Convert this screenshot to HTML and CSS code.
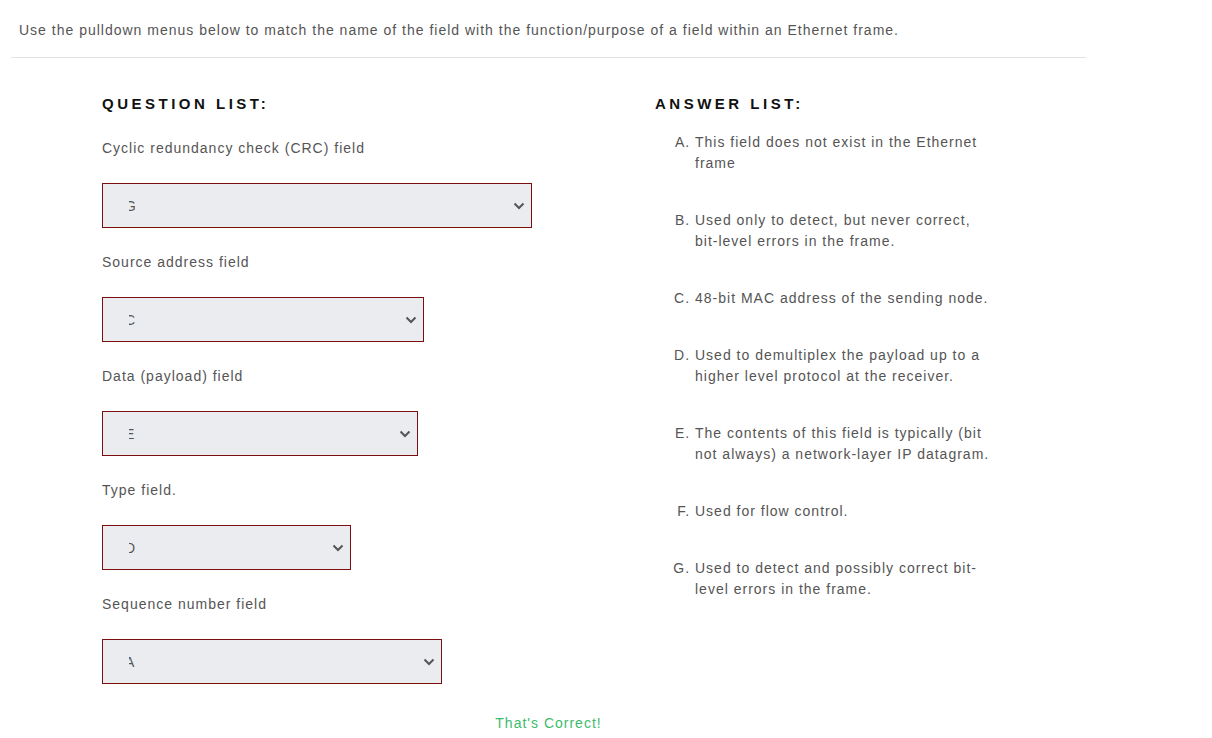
FILE: index.html
```html
<!DOCTYPE html>
<html>
<head>
<meta charset="utf-8">
<link rel="stylesheet" href="styles.css">
</head>
<body>
<div class="wrap">
  <p class="intro">Use the pulldown menus below to match the name of the field with the function/purpose of a field within an Ethernet frame.</p>
  <div class="cols">
    <div class="qcol">
      <h2 class="head">QUESTION LIST:</h2>
      <div class="q">
        <div class="qlabel">Cyclic redundancy check (CRC) field</div>
        <div class="sel" style="width:430px"><span class="val"><span>G</span></span><svg class="chev" viewBox="0 0 12 8" width="12" height="8"><path d="M1.5 1.5 L6 6 L10.5 1.5" fill="none" stroke="#555" stroke-width="2"/></svg></div>
      </div>
      <div class="q">
        <div class="qlabel">Source address field</div>
        <div class="sel" style="width:322px"><span class="val"><span>C</span></span><svg class="chev" viewBox="0 0 12 8" width="12" height="8"><path d="M1.5 1.5 L6 6 L10.5 1.5" fill="none" stroke="#555" stroke-width="2"/></svg></div>
      </div>
      <div class="q">
        <div class="qlabel">Data (payload) field</div>
        <div class="sel" style="width:316px"><span class="val"><span>E</span></span><svg class="chev" viewBox="0 0 12 8" width="12" height="8"><path d="M1.5 1.5 L6 6 L10.5 1.5" fill="none" stroke="#555" stroke-width="2"/></svg></div>
      </div>
      <div class="q">
        <div class="qlabel">Type field.</div>
        <div class="sel" style="width:249px"><span class="val"><span>D</span></span><svg class="chev" viewBox="0 0 12 8" width="12" height="8"><path d="M1.5 1.5 L6 6 L10.5 1.5" fill="none" stroke="#555" stroke-width="2"/></svg></div>
      </div>
      <div class="q">
        <div class="qlabel">Sequence number field</div>
        <div class="sel" style="width:340px"><span class="val"><span>A</span></span><svg class="chev" viewBox="0 0 12 8" width="12" height="8"><path d="M1.5 1.5 L6 6 L10.5 1.5" fill="none" stroke="#555" stroke-width="2"/></svg></div>
      </div>
    </div>
    <div class="acol">
      <h2 class="head">ANSWER LIST:</h2>
      <ol class="answers">
        <li>This field does not exist in the Ethernet frame</li>
        <li>Used only to detect, but never correct, bit-level errors in the frame.</li>
        <li>48-bit MAC address of the sending node.</li>
        <li>Used to demultiplex the payload up to a higher level protocol at the receiver.</li>
        <li>The contents of this field is typically (bit not always) a network-layer IP datagram.</li>
        <li>Used for flow control.</li>
        <li>Used to detect and possibly correct bit-level errors in the frame.</li>
      </ol>
    </div>
  </div>
  <p class="result">That's Correct!</p>
</div>
</body>
</html>
```

FILE: styles.css
```css
html, body {
  margin: 0;
  padding: 0;
  background: #fff;
}
body {
  font-family: "Liberation Sans", Arial, sans-serif;
  font-size: 14px;
  color: #555;
  letter-spacing: 1px;
}
.wrap {
  width: 1075px;
  margin-left: 11px;
}
.intro {
  margin: 0;
  padding: 21px 8px 18px 8px;
  line-height: 18px;
  border-bottom: 1px solid #e3e3e3;
}
.cols {
  display: flex;
  padding-top: 36px;
}
.qcol {
  width: 553px;
  padding-left: 91px;
  box-sizing: border-box;
}
.acol {
  padding-left: 91px;
}
.head {
  margin: 0;
  font-size: 15px;
  font-weight: bold;
  color: #111;
  letter-spacing: 3.5px;
  line-height: 20px;
}
.qcol .head {
  margin-bottom: 24px;
}
.qlabel {
  line-height: 20px;
  margin-bottom: 25px;
}
.q {
  margin-bottom: 24px;
}
.q:last-child {
  margin-bottom: 0;
}
.sel {
  height: 45px;
  box-sizing: border-box;
  border: 1px solid #7b0f0f;
  background: #ebecef;
  display: flex;
  align-items: center;
  justify-content: space-between;
  padding: 0 6px 0 26px;
}
.val {
  display: inline-block;
  width: 6px;
  overflow: hidden;
  color: #555;
  font-size: 14px;
  line-height: 16px;
}
.val span {
  display: inline-block;
  margin-left: -4px;
}
.chev {
  display: block;
}
.answers {
  margin: 18px 0 0 0;
  padding-left: 40px;
  width: 300px;
  line-height: 21px;
  list-style-type: upper-alpha;
}
.answers li {
  margin-bottom: 36px;
  padding-left: 0;
}
.result {
  margin: 0;
  margin-top: 30px;
  text-align: center;
  color: #3dbb6c;
  line-height: 18px;
}
```
